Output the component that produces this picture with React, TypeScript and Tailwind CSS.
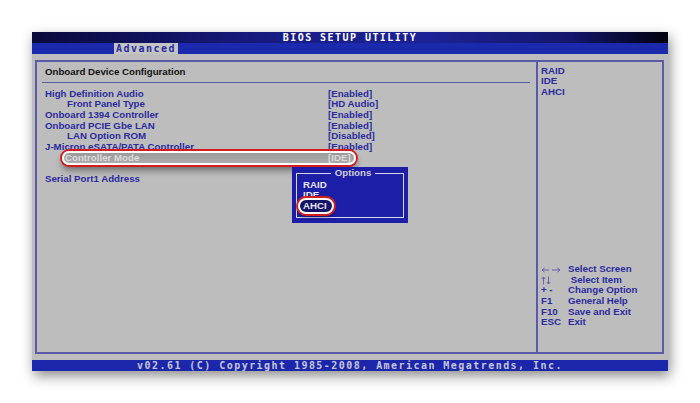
const mono = "font-['DejaVu_Sans_Mono',monospace] font-bold text-[10px] leading-[11px] tracking-[1.45px]";
const sans = "font-['Liberation_Sans',Arial,sans-serif] font-bold text-[9.7px] leading-[10.67px]";

const rows: { label: string; value: string; indent?: boolean }[] = [
  { label: "High Definition Audio", value: "[Enabled]" },
  { label: "Front Panel Type", value: "[HD Audio]", indent: true },
  { label: "Onboard 1394 Controller", value: "[Enabled]" },
  { label: "Onboard PCIE Gbe LAN", value: "[Enabled]" },
  { label: "LAN Option ROM", value: "[Disabled]", indent: true },
  { label: "J-Micron eSATA/PATA Controller", value: "[Enabled]" },
];

const help: [string, string][] = [
  ["lr", "Select Screen"],
  ["ud", " Select Item"],
  ["+ -", "Change Option"],
  ["F1", "General Help"],
  ["F10", "Save and Exit"],
  ["ESC", "Exit"],
];

function HelpKey({ k }: { k: string }) {
  if (k === "lr") {
    return (
      <svg width="20" height="8" viewBox="0 0 20 8" className="mt-[1px]">
        <path d="M1 4h7M1 4l2.5-2M1 4l2.5 2M11 4h8M19 4l-2.5-2M19 4l-2.5 2" stroke="#5a5aa8" strokeWidth="0.9" fill="none" />
      </svg>
    );
  }
  if (k === "ud") {
    return (
      <svg width="12" height="9" viewBox="0 0 12 9">
        <path d="M2.5 8.5V1M2.5 1L0.8 3M2.5 1L4.2 3M7.5 0.5V8M7.5 8L5.8 6M7.5 8L9.2 6" stroke="#5a5aa8" strokeWidth="0.9" fill="none" />
      </svg>
    );
  }
  return <span>{k}</span>;
}

export default function App() {
  return (
    <div className="w-[700px] h-[403px] bg-white pt-[32px] pl-[32px]">
      <div className="w-[636px] h-[339px] flex flex-col shadow-[2px_5px_12px_rgba(0,0,0,0.45)]">
        <div className={`h-[11px] bg-[linear-gradient(90deg,#09093a_0%,#181c86_40%,#1c2296_62%,#13166a_85%,#00000c_100%)] text-white text-center ${mono}`}>
          BIOS SETUP UTILITY
        </div>
        <div className="h-[11px] bg-[#1b29ac] pl-[82px]">
          <div className={`w-[64px] h-[11px] bg-[#c4c4c4] text-[#2a2aa2] text-center ${mono}`}>Advanced</div>
        </div>
        <div className="relative h-[306px] bg-[#bdbdbd] pt-[6px] pl-[3px] pr-[4px] pb-[6px]">
          <div className="flex h-full border-2 border-[#5a5aa8]">
            <div className="w-[499px] flex flex-col">
              <div className="pl-[8px] pt-[4px] h-[16px] font-['Liberation_Sans',Arial,sans-serif] font-bold text-[9.7px] leading-[12px] text-[#111]">
                Onboard Device Configuration
              </div>
              <div className="ml-[5px] mr-[6px] mt-[4px] h-px bg-[#5a5aa8]" />
              <div className={`pl-[8px] mt-[5.7px] text-[#2b2b9e] ${sans}`}>
                {rows.map((r) => (
                  <div key={r.label} className="grid grid-cols-[283px_1fr] h-[10.67px]">
                    <span className={r.indent ? "pl-[22px]" : ""}>{r.label}</span>
                    <span>{r.value}</span>
                  </div>
                ))}
                <div className="relative grid grid-cols-[283px_1fr] h-[10.67px] text-[#dcdcdc]">
                  <div className="absolute left-[17px] top-[-1.5px] w-[294px] h-[14px] rounded-full border-2 border-white bg-[linear-gradient(180deg,#9a9a9a,#acacac)] shadow-[0_0_0_2px_#d41c1c,0_5px_7px_rgba(0,0,0,0.45)]" />
                  <span className="relative pl-[20px]">Controller Mode</span>
                  <span className="relative">[IDE]</span>
                </div>
                <div className="h-[10.67px]" />
                <div className="h-[10.67px]">Serial Port1 Address</div>
              </div>
            </div>
            <div className="w-[2px] bg-[#5a5aa8]" />
            <div className={`flex-1 flex flex-col justify-between pl-[3px] pt-[3.7px] pb-[24px] text-[#2b2b9e] ${sans}`}>
              <div>
                <div>RAID</div>
                <div>IDE</div>
                <div>AHCI</div>
              </div>
              <div>
                {help.map(([k, label]) => (
                  <div key={label} className="flex h-[10.67px]">
                    <div className="w-[27px] flex items-center">
                      <HelpKey k={k} />
                    </div>
                    <span className="whitespace-pre">{label}</span>
                  </div>
                ))}
              </div>
            </div>
          </div>
          <div className="absolute left-[260px] top-[113px] w-[116px] h-[56px] bg-[#1c1ea8] px-[4px] pb-[5px] pt-[1px]">
            <fieldset className="h-full border border-[#d8d8e8] pl-[6px]">
              <legend className={`mx-auto px-[4px] text-[#cfcfd8] ${sans}`}>Options</legend>
              <div className={`mt-[1px] text-[#e8e8f4] ${sans}`}>
                <div>RAID</div>
                <div>IDE</div>
                <div className="relative w-fit">
                  <div className="absolute left-[-5px] top-[-3px] w-[36px] h-[16px] rounded-full border-2 border-white bg-[#141466] shadow-[0_0_0_2px_#d41c1c,0_3px_4px_rgba(0,0,0,0.4)]" />
                  <span className="relative">AHCI</span>
                </div>
              </div>
            </fieldset>
          </div>
        </div>
        <div className={`h-[11px] bg-[#1b26aa] text-[#c6c6dc] text-center ${mono}`}>
          v02.61 (C) Copyright 1985-2008, American Megatrends, Inc.
        </div>
      </div>
    </div>
  );
}
